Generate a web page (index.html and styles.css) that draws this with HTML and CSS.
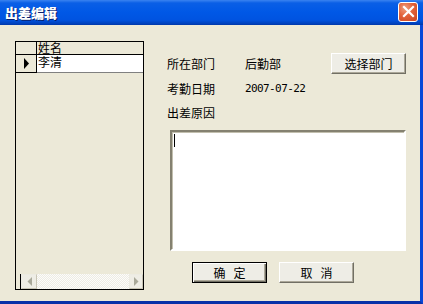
FILE: index.html
```html
<!DOCTYPE html>
<html>
<head>
<meta charset="utf-8">
<link rel="stylesheet" href="styles.css">
</head>
<body>
<div class="window">
  <div class="titlebar">
    <span class="title">出差编辑</span>
    <span class="close"><svg width="13" height="13" viewBox="0 0 13 13"><path d="M2 2 L11 11 M11 2 L2 11" stroke="#fff" stroke-width="2.2" stroke-linecap="square"/></svg></span>
  </div>
  <div class="body">
    <div class="grid">
      <div class="grow header">
        <div class="ind"></div>
        <div class="cell">姓名</div>
      </div>
      <div class="grow data">
        <div class="ind"><svg width="7" height="11" viewBox="0 0 7 11"><path d="M1 0 L6 5.5 L1 11 Z" fill="#000"/></svg></div>
        <div class="cell">李清</div>
      </div>
      <div class="gspace"></div>
      <div class="hscroll">
        <div class="sbtn left"><svg width="5" height="9" viewBox="0 0 5 9"><path d="M5 0 L0.5 4.5 L5 9 Z" fill="#a9a99a"/></svg></div>
        <div class="track"></div>
        <div class="sbtn right"><svg width="5" height="9" viewBox="0 0 5 9"><path d="M0 0 L4.5 4.5 L0 9 Z" fill="#a9a99a"/></svg></div>
      </div>
    </div>
    <div class="panel">
      <div class="row r1">
        <span class="label">所在部门</span>
        <span class="value">后勤部</span>
        <button class="btn pick">选择部门</button>
      </div>
      <div class="row r2">
        <span class="label">考勤日期</span>
        <span class="value num">2007-07-22</span>
      </div>
      <div class="row r3">
        <span class="label">出差原因</span>
      </div>
      <div class="memo"><span class="caret"></span></div>
      <div class="actions">
        <button class="btn default">确&nbsp;&nbsp;&nbsp;定</button>
        <button class="btn">取&nbsp;&nbsp;&nbsp;消</button>
      </div>
    </div>
  </div>
</div>
</body>
</html>
```
FILE: styles.css
```css
* { box-sizing: border-box; }
html, body { margin: 0; padding: 0; }
body {
  width: 423px;
  height: 304px;
  overflow: hidden;
  background: #ECE9D8;
  font-family: "Noto Sans CJK SC", "DejaVu Sans", sans-serif;
  font-size: 12px;
  color: #000;
}
.window {
  width: 423px;
  height: 304px;
  display: flex;
  flex-direction: column;
}
.titlebar {
  height: 25px;
  flex: none;
  display: flex;
  align-items: center;
  justify-content: space-between;
  padding: 0 5px 0 5px;
  background: linear-gradient(#3a83f0 0px, #0a5fe6 3px, #0058e6 12px, #0053e0 20px, #003fb8 24px, #0036a8 25px);
}
.title {
  color: #fff;
  font-weight: 900;
  font-size: 13px;
  text-shadow: 1px 1px 0 #0a1f6a;
  line-height: 14px;
}
.close {
  width: 20px;
  height: 20px;
  margin-top: -2px;
  border: 1px solid #fff;
  border-radius: 3px;
  background: radial-gradient(circle at 35% 30%, #f0a080 0%, #e2623a 45%, #c84420 100%);
  display: flex;
  align-items: center;
  justify-content: center;
}
.body {
  flex: 1;
  display: flex;
  border-right: 3px solid #0848d8;
  border-bottom: 3px solid #0831a8;
  padding: 16px 0 11px 15px;
}
.grid {
  width: 129px;
  height: 249px;
  border: 1px solid #000;
  display: flex;
  flex-direction: column;
  background: #ECE9D8;
}
.grow {
  display: flex;
  flex: none;
}
.grow.header { height: 13px; border-bottom: 1px solid #000; }
.grow.data { height: 18px; }
.ind {
  width: 21px;
  border-right: 1px solid #000;
  display: flex;
  align-items: center;
  justify-content: center;
  padding-left: 1px;
}
.data .ind { border-bottom: 1px solid #000; }
.cell {
  flex: 1;
  padding-left: 1px;
  font-size: 12px;
  line-height: 12px;
}
.data .cell {
  background: #fff;
  border-bottom: 1px solid #808080;
  line-height: 13px;
}
.gspace { flex: 1; }
.hscroll {
  height: 15px;
  display: flex;
  margin-left: 4px;
  border-left: 1px solid #000;
}
.sbtn {
  width: 16px;
  background: #EEEDE5;
  border: 1px solid #ECEBE2;
  border-right-color: #C9C6B6;
  border-bottom-color: #C9C6B6;
  display: flex;
  align-items: center;
  justify-content: center;
}
.sbtn.right { width: 14px; }
.track {
  flex: 1;
  background-color: #F6F5F0;
  background-image: repeating-conic-gradient(#fcfcfa 0% 25%, #eeece4 0% 50%);
  background-size: 2px 2px;
}
.panel {
  width: 239px;
  margin-left: 23px;
  display: flex;
  flex-direction: column;
  padding-top: 12px;
}
.row {
  display: flex;
  align-items: center;
}
.r1 { height: 21px; }
.r2 { height: 20px; margin-top: 4px; }
.r3 { height: 20px; margin-top: 4px; }
.label { width: 78px; }
.value { flex: none; }
.num { font-family: "DejaVu Sans Mono", monospace; font-size: 11px; letter-spacing: -0.6px; }
.btn {
  font-family: "Noto Sans CJK SC", "DejaVu Sans", sans-serif;
  font-size: 12px;
  width: 75px;
  height: 21px;
  padding: 0;
  background: #EEEDE6;
  border: 1px solid;
  border-color: #fff #716f64 #716f64 #fff;
  box-shadow: inset -1px -1px 0 #aca899;
  color: #000;
  line-height: 19px;
}
.pick { margin-left: auto; }
.memo {
  margin-top: 8px;
  margin-left: 3px;
  width: 236px;
  height: 121px;
  background: #fff;
  border: 2px solid;
  border-color: #848170 #fff #fff #848170;
  box-shadow: inset 1px 1px 0 #c2bfae;
  position: relative;
}
.caret {
  position: absolute;
  left: 2px;
  top: 2px;
  width: 1px;
  height: 13px;
  background: #000;
}
.actions {
  display: flex;
  gap: 12px;
  margin-top: 11px;
  padding-left: 25px;
}
.btn.default {
  border: 1px solid #000;
  box-shadow: inset 1px 1px 0 #fff, inset -1px -1px 0 #716f64, inset -2px -2px 0 #aca899;
}
```
